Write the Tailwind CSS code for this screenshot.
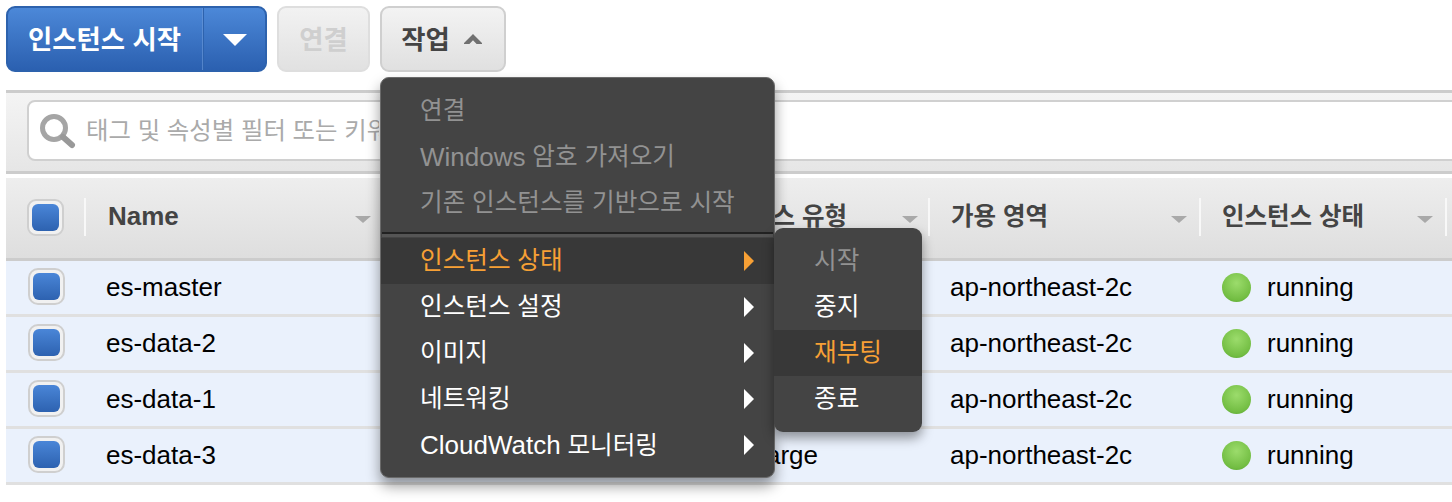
<!DOCTYPE html>
<html lang="ko">
<head>
    <meta charset="UTF-8">
    <title>EC2 Instances</title>
    <script src="https://cdn.jsdelivr.net/npm/@tailwindcss/browser@4"></script>
</head>
<body class="bg-white">
<div class="relative w-[1452px] h-[502px] overflow-hidden pl-[6px] pt-[6px] font-['Liberation_Sans','Noto_Sans_CJK_KR',sans-serif]">

    <!-- Buttons -->
    <div class="flex gap-[10px] h-[66px]">
        <div class="flex w-[261px] rounded-[9px] border-2 border-[#2d62ad] bg-gradient-to-b from-[#4c88d8] to-[#2b60b0] text-white">
            <div class="w-[194px] flex items-center justify-center pr-[1px] pt-[3px] text-[26.4px] font-bold">인스턴스 시작</div>
            <div class="w-[2px] bg-[#6d9ad9]/60 border-r border-[#2d62ad]"></div>
            <div class="flex-1 flex items-center justify-center">
                <span class="w-0 h-0 border-x-[12px] border-x-transparent border-t-[12px] border-t-white mt-[2px]"></span>
            </div>
        </div>
        <div class="w-[93px] rounded-[9px] border-2 border-[#dedede] bg-gradient-to-b from-[#f2f2f2] to-[#e1e1e1] flex items-center justify-center pt-[3px] text-[26.4px] font-bold text-[#cfcfcf]">연결</div>
        <div class="w-[126px] rounded-[9px] border-2 border-[#cfcfcf] bg-gradient-to-b from-[#f3f3f3] to-[#e0e0e0] flex items-center justify-center gap-[14px] pr-[3px] text-[26.4px] font-bold text-[#444]">
            <span class="pt-[3px]">작업</span>
            <svg class="w-[18px] h-[11px] mt-[-1px]" viewBox="0 0 20 12"><path d="M0 11 L10 1 L20 11 L20 12 L14 12 L10 8 L6 12 L0 12 Z" fill="#707070"/></svg>
        </div>
    </div>

    <!-- Search bar -->
    <div class="mt-[18px] h-[84px] border-t-[3px] border-b-[3px] border-[#cccccc] bg-gradient-to-b from-[#f4f4f4] to-[#e6e6e6] pl-[21px] pt-[7px]">
        <div class="flex items-center h-[61px] w-[1440px] rounded-[8px] border-2 border-[#d0d0d0] bg-white pl-[10px] text-[24.4px] text-[#aaaaaa] whitespace-nowrap">
            <svg class="w-[38px] h-[38px] mr-[9px] mt-[2px] shrink-0" viewBox="0 0 38 38">
                <circle cx="15" cy="15" r="11.5" fill="none" stroke="#a5a5a5" stroke-width="5"/>
                <path d="M24 24 L33 32" stroke="#999" stroke-width="6" stroke-linecap="round"/>
            </svg>
            <span class="w-[293px] overflow-hidden pt-[1px]">태그 및 속성별 필터 또는 키워드별 검색</span>
        </div>
    </div>

    <!-- Table -->
    <div class="mt-[2px] border-t-2 border-white">
        <div class="grid grid-cols-[80px_294px_7px_541px_271px_248px] h-[83px] border-b-[3px] border-[#cccccc] bg-gradient-to-b from-[#eeeeee] to-[#dedede] text-[24.5px] font-bold text-[#444] items-start">
            <div class="flex h-[38px] mt-[20px] pl-[21px] items-center justify-between">
                <span class="w-[37px] h-[37px] rounded-[9px] border-2 border-[#cfcfcf] bg-[#f1f1f1] p-[3px]"><span class="block w-full h-full rounded-[6px] bg-gradient-to-b from-[#4a86d8] to-[#2d62b0]"></span></span>
                <span class="w-[2px] h-[38px] bg-[#f8f8f8]"></span>
            </div>
            <div class="flex h-[38px] mt-[20px] pl-[22px] pr-[9px] items-center justify-between">
                <span class="text-[26px] mt-[-2px]">Name</span>
                <span class="w-0 h-0 border-x-[8px] border-x-transparent border-t-[7px] border-t-[#a9a9a9] mt-[4px]"></span>
            </div>
            <div></div>
            <div class="flex h-[38px] mt-[20px] items-center justify-between pr-[10px]">
                <span class="pl-[318px]">인스턴스 유형</span>
                <span class="w-0 h-0 border-x-[8px] border-x-transparent border-t-[7px] border-t-[#a9a9a9] mt-[4px]"></span>
            </div>
            <div class="flex h-[38px] mt-[20px] items-center justify-between pr-[12px] border-l-2 border-[#f8f8f8] pl-[21px]">
                가용 영역
                <span class="w-0 h-0 border-x-[8px] border-x-transparent border-t-[7px] border-t-[#a9a9a9] mt-[4px]"></span>
            </div>
            <div class="flex h-[38px] mt-[20px] items-center justify-between pr-[12px] border-x-2 border-[#f8f8f8] pl-[21px]">
                인스턴스 상태
                <span class="w-0 h-0 border-x-[8px] border-x-transparent border-t-[7px] border-t-[#a9a9a9] mt-[4px]"></span>
            </div>
        </div>

        <div id="rows" class="text-[26px] text-black">
            <div class="grid grid-cols-[80px_844px_271px_1fr] h-[56px] items-center bg-[#eaf1fc] border-b-[3px] border-[#e0e0e0]">
                <div class="pl-[22px] mt-[-2px]"><span class="block w-[37px] h-[37px] rounded-[10px] border-2 border-[#cfcfcf] bg-[#f1f1f1] p-[3px]"><span class="block w-full h-full rounded-[6px] bg-gradient-to-b from-[#4a86d8] to-[#2d62b0]"></span></span></div>
                <div class="pl-[20px]">es-master</div>
                <div class="pl-[20px]">ap-northeast-2c</div>
                <div class="flex items-center gap-[16px] pl-[21px]"><span class="w-[29px] h-[29px] rounded-full bg-[radial-gradient(circle_at_50%_35%,#9cdc6c,#72bd42_70%,#4f9a2d)]"></span>running</div>
            </div>
            <div class="grid grid-cols-[80px_844px_271px_1fr] h-[56px] items-center bg-[#eaf1fc] border-b-[3px] border-[#e0e0e0]">
                <div class="pl-[22px] mt-[-2px]"><span class="block w-[37px] h-[37px] rounded-[10px] border-2 border-[#cfcfcf] bg-[#f1f1f1] p-[3px]"><span class="block w-full h-full rounded-[6px] bg-gradient-to-b from-[#4a86d8] to-[#2d62b0]"></span></span></div>
                <div class="pl-[20px]">es-data-2</div>
                <div class="pl-[20px]">ap-northeast-2c</div>
                <div class="flex items-center gap-[16px] pl-[21px]"><span class="w-[29px] h-[29px] rounded-full bg-[radial-gradient(circle_at_50%_35%,#9cdc6c,#72bd42_70%,#4f9a2d)]"></span>running</div>
            </div>
            <div class="grid grid-cols-[80px_844px_271px_1fr] h-[56px] items-center bg-[#eaf1fc] border-b-[3px] border-[#e0e0e0]">
                <div class="pl-[22px] mt-[-2px]"><span class="block w-[37px] h-[37px] rounded-[10px] border-2 border-[#cfcfcf] bg-[#f1f1f1] p-[3px]"><span class="block w-full h-full rounded-[6px] bg-gradient-to-b from-[#4a86d8] to-[#2d62b0]"></span></span></div>
                <div class="pl-[20px]">es-data-1</div>
                <div class="pl-[20px]">ap-northeast-2c</div>
                <div class="flex items-center gap-[16px] pl-[21px]"><span class="w-[29px] h-[29px] rounded-full bg-[radial-gradient(circle_at_50%_35%,#9cdc6c,#72bd42_70%,#4f9a2d)]"></span>running</div>
            </div>
            <div class="grid grid-cols-[80px_844px_271px_1fr] h-[56px] items-center bg-[#eaf1fc] border-b-[3px] border-[#e0e0e0]">
                <div class="pl-[22px] mt-[-2px]"><span class="block w-[37px] h-[37px] rounded-[10px] border-2 border-[#cfcfcf] bg-[#f1f1f1] p-[3px]"><span class="block w-full h-full rounded-[6px] bg-gradient-to-b from-[#4a86d8] to-[#2d62b0]"></span></span></div>
                <div class="flex justify-between pl-[20px] pr-[112px]"><span>es-data-3</span><span>m4.large</span></div>
                <div class="pl-[20px]">ap-northeast-2c</div>
                <div class="flex items-center gap-[16px] pl-[21px]"><span class="w-[29px] h-[29px] rounded-full bg-[radial-gradient(circle_at_50%_35%,#9cdc6c,#72bd42_70%,#4f9a2d)]"></span>running</div>
            </div>
        </div>
    </div>

    <!-- Actions menu -->
    <div class="absolute left-[380px] top-[77px] w-[395px] h-[401px] rounded-[9px] bg-[#444444] border border-[#6a6a6a] shadow-[0_8px_14px_rgba(0,0,0,0.4)] text-[24.6px] text-white">
        <div class="pt-[10px] pb-[6px] text-[#929292]">
            <div class="h-[46px] pl-[39px] flex items-center">연결</div>
            <div class="h-[46px] pl-[39px] flex items-center whitespace-pre"><span class="text-[26px]">Windows</span> 암호 가져오기</div>
            <div class="h-[46px] pl-[39px] flex items-center">기존 인스턴스를 기반으로 시작</div>
        </div>
        <div class="mx-[1px] h-[5px] border-t-2 border-[#222222] bg-[#555555]"></div>
        <div class="mt-[1px]">
            <div class="h-[46px] pl-[39px] pr-[20px] flex items-center justify-between bg-[#383838] text-[#f7a035]">인스턴스 상태<span class="w-0 h-0 border-y-[10px] border-y-transparent border-l-[10px] border-l-[#f7a035]"></span></div>
            <div class="h-[46px] pl-[39px] pr-[20px] flex items-center justify-between">인스턴스 설정<span class="w-0 h-0 border-y-[10px] border-y-transparent border-l-[10px] border-l-white"></span></div>
            <div class="h-[46px] pl-[39px] pr-[20px] flex items-center justify-between">이미지<span class="w-0 h-0 border-y-[10px] border-y-transparent border-l-[10px] border-l-white"></span></div>
            <div class="h-[46px] pl-[39px] pr-[20px] flex items-center justify-between">네트워킹<span class="w-0 h-0 border-y-[10px] border-y-transparent border-l-[10px] border-l-white"></span></div>
            <div class="h-[46px] pl-[39px] pr-[20px] flex items-center justify-between"><span class="whitespace-pre"><span class="text-[26px]">CloudWatch</span> 모니터링</span><span class="w-0 h-0 border-y-[10px] border-y-transparent border-l-[10px] border-l-white"></span></div>
        </div>
    </div>

    <!-- Instance state submenu -->
    <div class="absolute left-[774px] top-[228px] w-[148px] h-[204px] rounded-[9px] bg-[#444444] shadow-[0_6px_12px_rgba(0,0,0,0.4)] pt-[10px] text-[24.6px] text-white">
        <div class="h-[46px] pl-[40px] flex items-center text-[#929292]">시작</div>
        <div class="h-[46px] pl-[40px] flex items-center">중지</div>
        <div class="h-[46px] pl-[40px] flex items-center bg-[#383838] text-[#f7a035]">재부팅</div>
        <div class="h-[46px] pl-[40px] flex items-center">종료</div>
    </div>
</div>
</body>
</html>
